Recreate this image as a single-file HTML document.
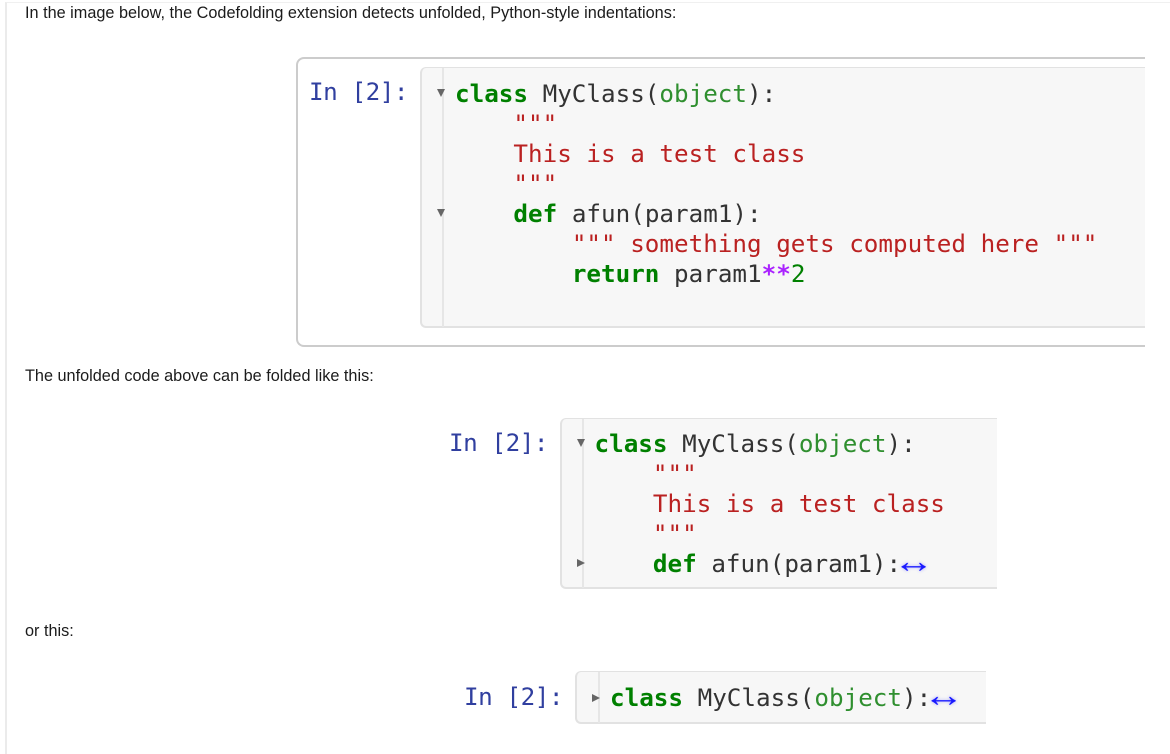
<!DOCTYPE html>
<html><head><meta charset="utf-8">
<style>
html,body{margin:0;padding:0;width:1170px;height:754px;background:#fff;overflow:hidden}
.a{position:absolute;box-sizing:border-box}
.p{font:16.26px/18px "Liberation Sans",Arial,sans-serif;color:#1b1b1b;white-space:pre}
.c{font:24.25px/30px "DejaVu Sans Mono","Liberation Mono",monospace;color:#333;white-space:pre}
.n{color:#303f9f;letter-spacing:-.45px}
.k{color:#008000;font-weight:bold}
.s{color:#ba2121}
.g{color:#2f8f2f}
.o{color:#aa22ff;font-weight:bold}
.m{color:#008000}
.box{background:#f7f7f7;border:2px solid #e2e2e2;border-top-width:1px;border-right:0;border-radius:6px 0 0 6px}
.gut{width:2px;background:#e6e6e6}
.tri{width:0;height:0}
.dn{border-left:4.5px solid transparent;border-right:4.5px solid transparent;border-top:8px solid #666}
.rt{border-top:4.5px solid transparent;border-bottom:4.5px solid transparent;border-left:8px solid #666}
.ar{display:inline-block;color:#1a1aff;font-family:"Liberation Sans",sans-serif;text-shadow:0 0 2px rgba(60,60,255,.45);transform:translate(.5px,-2.5px) scale(1.7,1.4)}
</style></head><body>
<div class="a" style="left:5px;top:2px;width:1165px;height:752px;border-left:2px solid #ebebeb;border-top:1px solid #f0f0f0"></div>

<div class="a p" style="left:25px;top:4px">In the image below, the Codefolding extension detects unfolded, Python-style indentations:</div>

<div class="a" style="left:296px;top:57px;width:849px;height:290px;border:2px solid #cccccc;border-right:0;border-radius:8px 0 0 8px"></div>
<div class="a c n" style="left:309px;top:77px">In [2]:</div>
<div class="a box" style="left:420px;top:67px;width:725px;height:261px"></div>
<div class="a gut" style="left:442px;top:68px;height:259px"></div>
<div class="a tri dn" style="left:437px;top:89px"></div>
<div class="a tri dn" style="left:437px;top:209px"></div>
<div class="a c" style="left:455px;top:79px"><span class="k">class</span> MyClass(<span class="g">object</span>):
    <span class="s">"""</span>
    <span class="s">This is a test class</span>
    <span class="s">"""</span>
    <span class="k">def</span> afun(param1):
        <span class="s">""" something gets computed here """</span>
        <span class="k">return</span> param1<span class="o">**</span><span class="m">2</span></div>

<div class="a p" style="left:25px;top:367px">The unfolded code above can be folded like this:</div>

<div class="a c n" style="left:449px;top:428px">In [2]:</div>
<div class="a box" style="left:560px;top:418px;width:437px;height:171px"></div>
<div class="a gut" style="left:582px;top:419px;height:169px"></div>
<div class="a tri dn" style="left:577px;top:439px"></div>
<div class="a tri rt" style="left:577px;top:559px"></div>
<div class="a c" style="left:594.5px;top:429px"><span class="k">class</span> MyClass(<span class="g">object</span>):
    <span class="s">"""</span>
    <span class="s">This is a test class</span>
    <span class="s">"""</span>
    <span class="k">def</span> afun(param1):<span class="ar">↔</span></div>

<div class="a p" style="left:25px;top:622px">or this:</div>

<div class="a c n" style="left:464px;top:682px">In [2]:</div>
<div class="a box" style="left:575px;top:671px;width:411px;height:53px"></div>
<div class="a gut" style="left:598px;top:672px;height:51px"></div>
<div class="a tri rt" style="left:592px;top:694px"></div>
<div class="a c" style="left:610px;top:683px"><span class="k">class</span> MyClass(<span class="g">object</span>):<span class="ar">↔</span></div>
</body></html>
